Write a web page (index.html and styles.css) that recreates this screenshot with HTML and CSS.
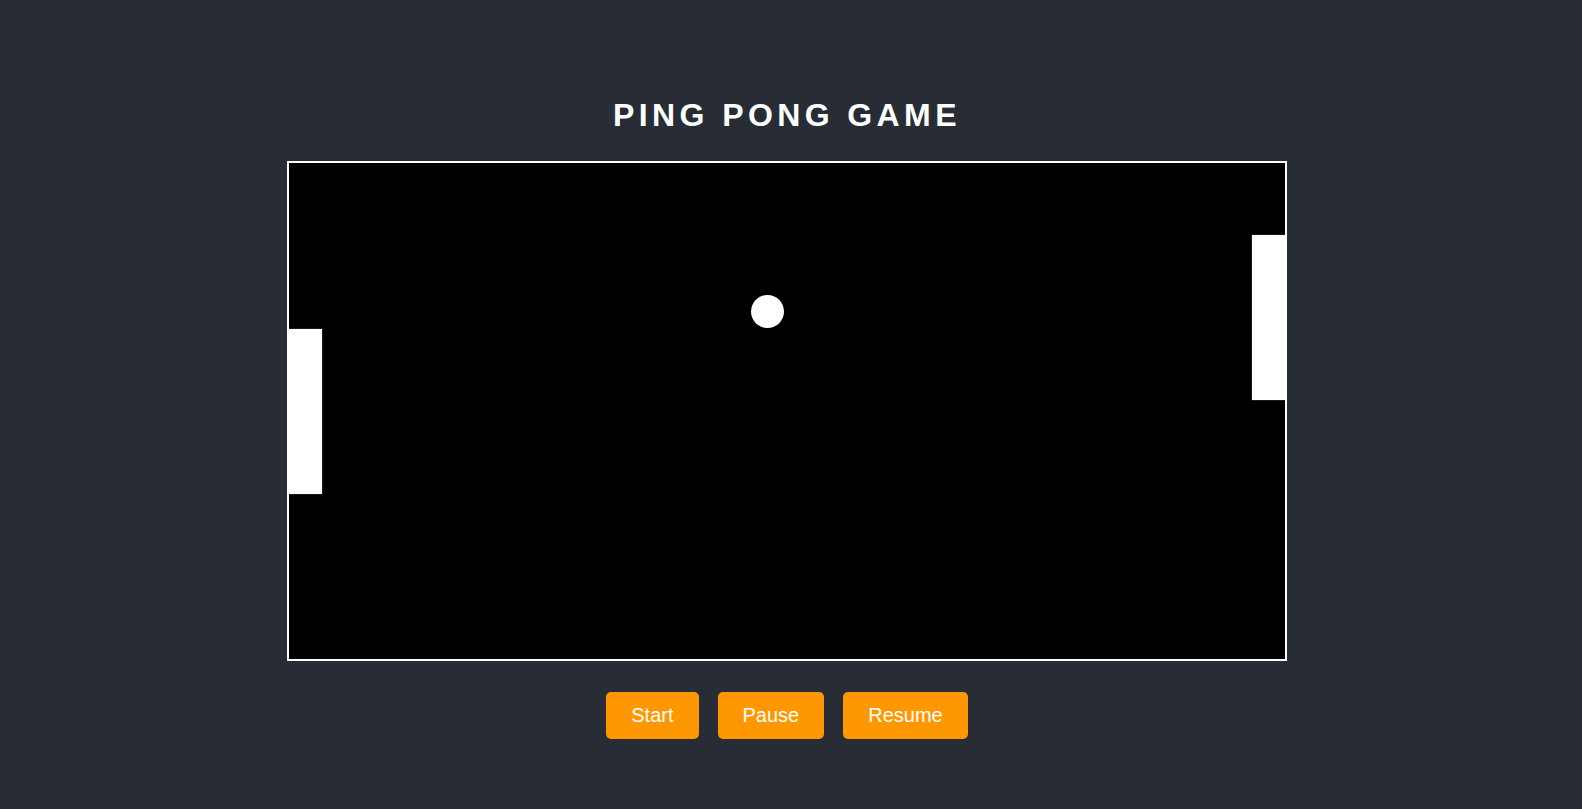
FILE: index.html
```html
<!DOCTYPE html>
<html lang="en">
<head>
<meta charset="utf-8">
<title>Ping Pong Game</title>
<link rel="stylesheet" href="styles.css">
</head>
<body>
  <main class="app">
    <h1 class="title">PING PONG GAME</h1>
    <div class="board">
      <div class="paddle paddle-left"></div>
      <div class="paddle paddle-right"></div>
      <div class="ball"></div>
    </div>
    <div class="controls">
      <button class="btn">Start</button>
      <button class="btn">Pause</button>
      <button class="btn">Resume</button>
    </div>
  </main>
</body>
</html>
```
FILE: styles.css
```css
html, body {
  margin: 0;
  padding: 0;
  height: 100%;
}
body {
  background: #282c34;
  font-family: "Liberation Sans", Arial, sans-serif;
  color: #fff;
  overflow: hidden;
}
.app {
  display: flex;
  flex-direction: column;
  align-items: center;
  padding: 97px 8px 0 0;
}
.title {
  margin: 0 0 27px;
  font-size: 32px;
  font-weight: bold;
  letter-spacing: 4.4px;
  line-height: 37px;
  color: #fff;
}
.board {
  position: relative;
  box-sizing: border-box;
  width: 1000px;
  height: 500px;
  border: 2px solid #fff;
  background: #000;
  overflow: hidden;
}
.paddle {
  position: absolute;
  width: 33px;
  height: 165px;
  background: #fff;
  box-shadow: 0 0 1px rgba(255,255,255,0.6);
}
.paddle-left {
  left: 0;
  top: 166px;
}
.paddle-right {
  right: 0;
  top: 72px;
}
.ball {
  position: absolute;
  left: 462px;
  top: 132px;
  width: 33px;
  height: 33px;
  border-radius: 50%;
  background: #fff;
  filter: blur(0.7px);
}
.controls {
  display: flex;
  gap: 19px;
  margin-top: 31px;
}
.btn {
  font-family: "Liberation Sans", Arial, sans-serif;
  font-size: 20px;
  line-height: 23px;
  color: #fff;
  background: #ff9800;
  border: none;
  border-radius: 5px;
  padding: 12px 25px;
  cursor: pointer;
}
```
